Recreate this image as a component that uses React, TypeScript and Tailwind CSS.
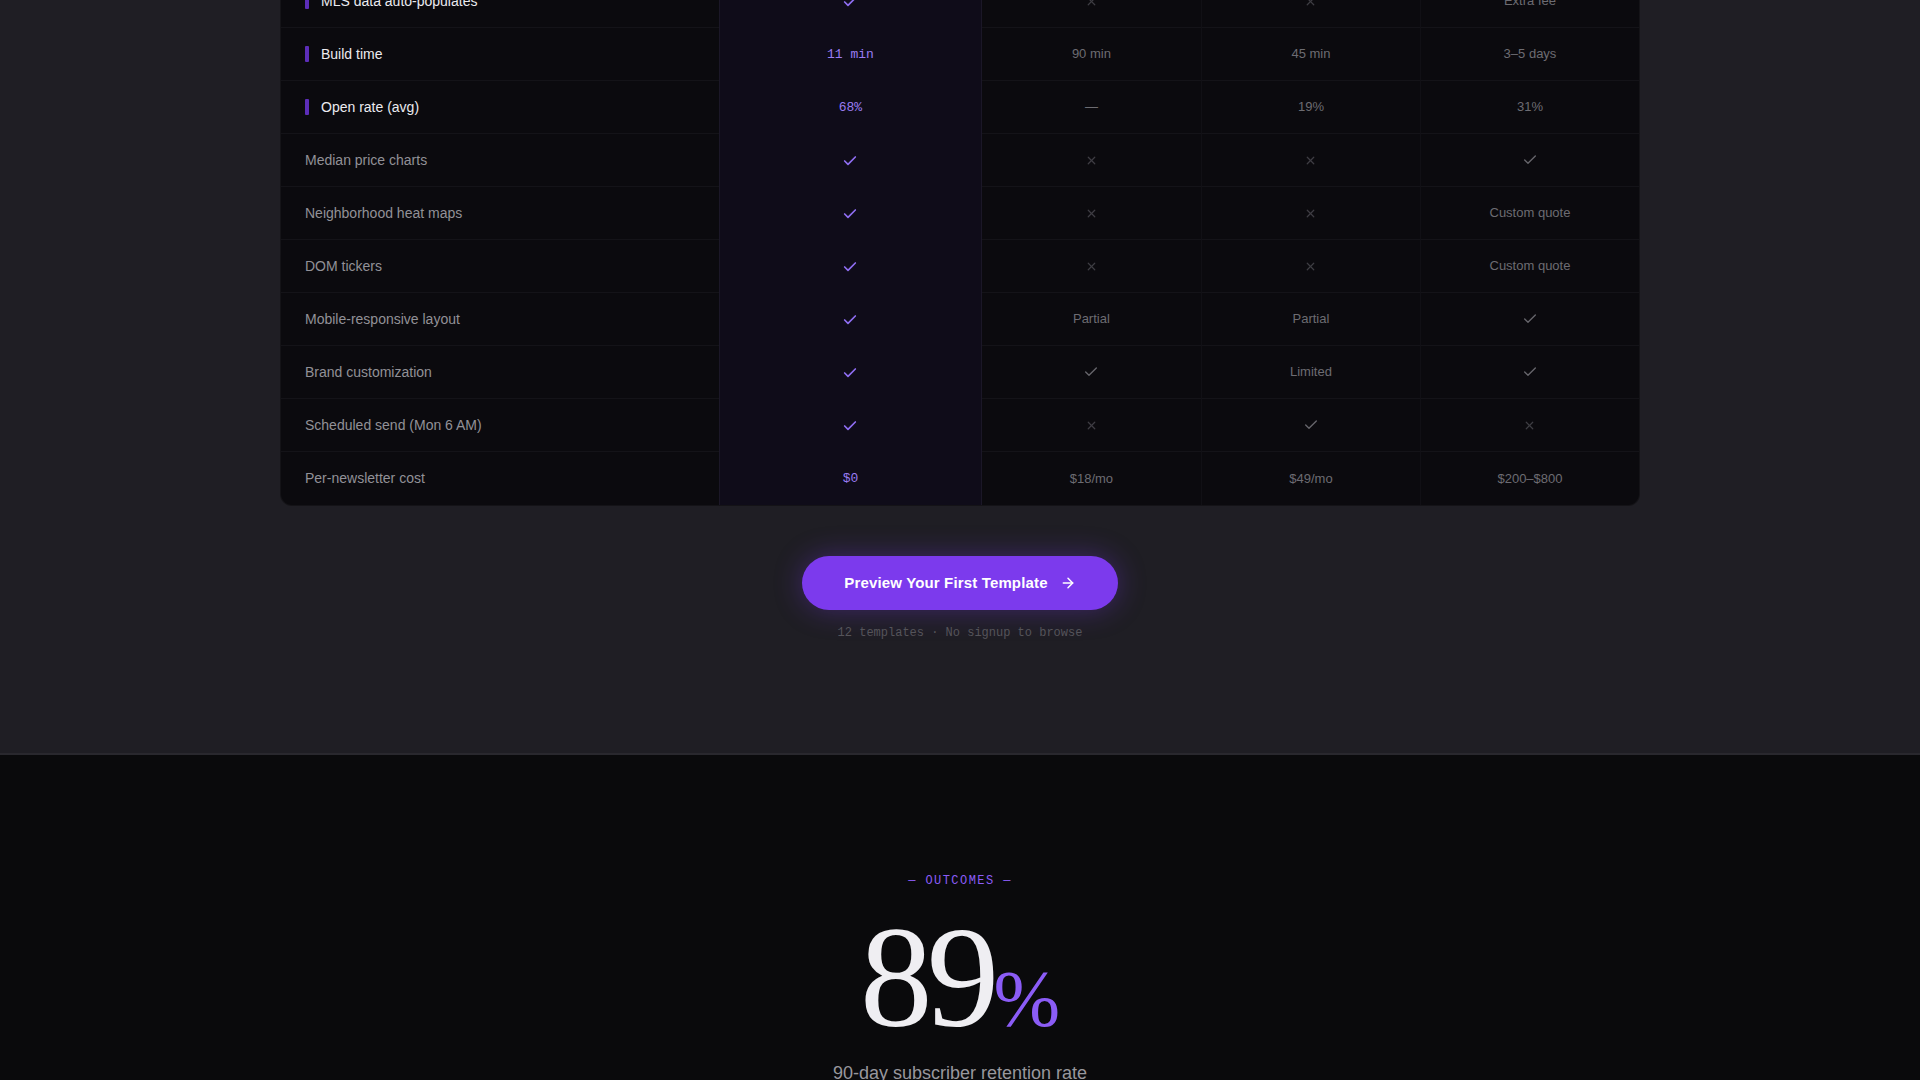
import { Check, X, ArrowRight } from "lucide-react";

type Cell = "yes" | "no" | string;

type Row = {
  label: string;
  key?: boolean;
  ours: Cell;
  others: [Cell, Cell, Cell];
};

const ROWS: Row[] = [
  { label: "MLS data auto-populates", key: true, ours: "yes", others: ["no", "no", "Extra fee"] },
  { label: "Build time", key: true, ours: "11 min", others: ["90 min", "45 min", "3–5 days"] },
  { label: "Open rate (avg)", key: true, ours: "68%", others: ["—", "19%", "31%"] },
  { label: "Median price charts", ours: "yes", others: ["no", "no", "yes"] },
  { label: "Neighborhood heat maps", ours: "yes", others: ["no", "no", "Custom quote"] },
  { label: "DOM tickers", ours: "yes", others: ["no", "no", "Custom quote"] },
  { label: "Mobile-responsive layout", ours: "yes", others: ["Partial", "Partial", "yes"] },
  { label: "Brand customization", ours: "yes", others: ["yes", "Limited", "yes"] },
  { label: "Scheduled send (Mon 6 AM)", ours: "yes", others: ["no", "yes", "no"] },
  { label: "Per-newsletter cost", ours: "$0", others: ["$18/mo", "$49/mo", "$200–$800"] },
];

function OtherValue({ value }: { value: Cell }) {
  if (value === "yes") return <Check className="w-4 h-4 text-[#67666c]" strokeWidth={2} />;
  if (value === "no") return <X className="w-[13px] h-[13px] text-[#3e3d43]" strokeWidth={2.25} />;
  return <span className="text-[13px] text-[#6d6c72]">{value}</span>;
}

function OursValue({ value }: { value: Cell }) {
  if (value === "yes") return <Check className="w-4 h-4 text-[#8f6ef2]" strokeWidth={2.5} />;
  return <span className="text-[13px] text-[#9a7cf2] font-['Liberation_Mono',monospace]">{value}</span>;
}

export default function App() {
  return (
    <div className="min-h-screen bg-[#0a0a0c] font-['Liberation_Sans',Arial,sans-serif] overflow-hidden">
      {/* Comparison */}
      <section className="bg-[#1f1e24] border-b-2 border-[#29282e] pb-[112px]">
        <div className="w-[1360px] mx-auto -mt-[25px] bg-[#0b0a0e] rounded-b-xl border-x border-b border-white/[0.04] overflow-hidden">
          {ROWS.map((row, i) => {
            const last = i === ROWS.length - 1;
            const rowBorder = last ? "" : "border-b border-[#141318]";
            return (
              <div key={row.label} className="grid grid-cols-[2fr_1.2fr_1fr_1fr_1fr] h-[53px]">
                <div className={`flex items-center pl-6 ${rowBorder}`}>
                  {row.key ? (
                    <>
                      <span className="w-1 h-4 bg-[#5c2db8] rounded-[1px] mr-3" />
                      <span className="text-[14px] text-[#ecebf0]">{row.label}</span>
                    </>
                  ) : (
                    <span className="text-[14px] text-[#929197]">{row.label}</span>
                  )}
                </div>
                <div className="flex items-center justify-center bg-[#0f0c19] border-x border-[#1b1727]">
                  <OursValue value={row.ours} />
                </div>
                {row.others.map((v, j) => (
                  <div
                    key={j}
                    className={`flex items-center justify-center ${rowBorder} ${j > 0 ? "border-l border-l-[#111015]" : ""}`}
                  >
                    <OtherValue value={v} />
                  </div>
                ))}
              </div>
            );
          })}
        </div>

        <div className="flex flex-col items-center mt-[50px]">
          <button className="h-[54px] w-[316px] rounded-full bg-[#7c3aed] text-white text-[15px] font-bold tracking-[0.01em] flex items-center justify-center gap-3 shadow-[0_0_28px_rgba(124,58,237,0.35)]">
            Preview Your First Template
            <ArrowRight className="w-4 h-4" strokeWidth={2.25} />
          </button>
          <p className="mt-[15px] text-[12px] leading-4 text-[#55545a] font-['Liberation_Mono',monospace]">
            12 templates · No signup to browse
          </p>
        </div>
      </section>

      {/* Outcomes */}
      <section className="bg-[#0a0a0c] pt-[118px] pb-24 flex flex-col items-center">
        <p className="text-[12px] leading-4 tracking-[0.12em] text-[#8b5cf6] font-['Liberation_Mono',monospace]">
          — OUTCOMES —
        </p>
        <div className="mt-[16px] flex items-baseline font-['Liberation_Serif','Times_New_Roman',serif] leading-none">
          <span className="text-[145px] tracking-[-0.04em] text-[#efeef2]">89</span>
          <span className="text-[80px] text-[#8b5cf6]">%</span>
        </div>
        <p className="mt-[11px] text-[18px] leading-6 text-[#98979d]">90-day subscriber retention rate</p>
      </section>
    </div>
  );
}
